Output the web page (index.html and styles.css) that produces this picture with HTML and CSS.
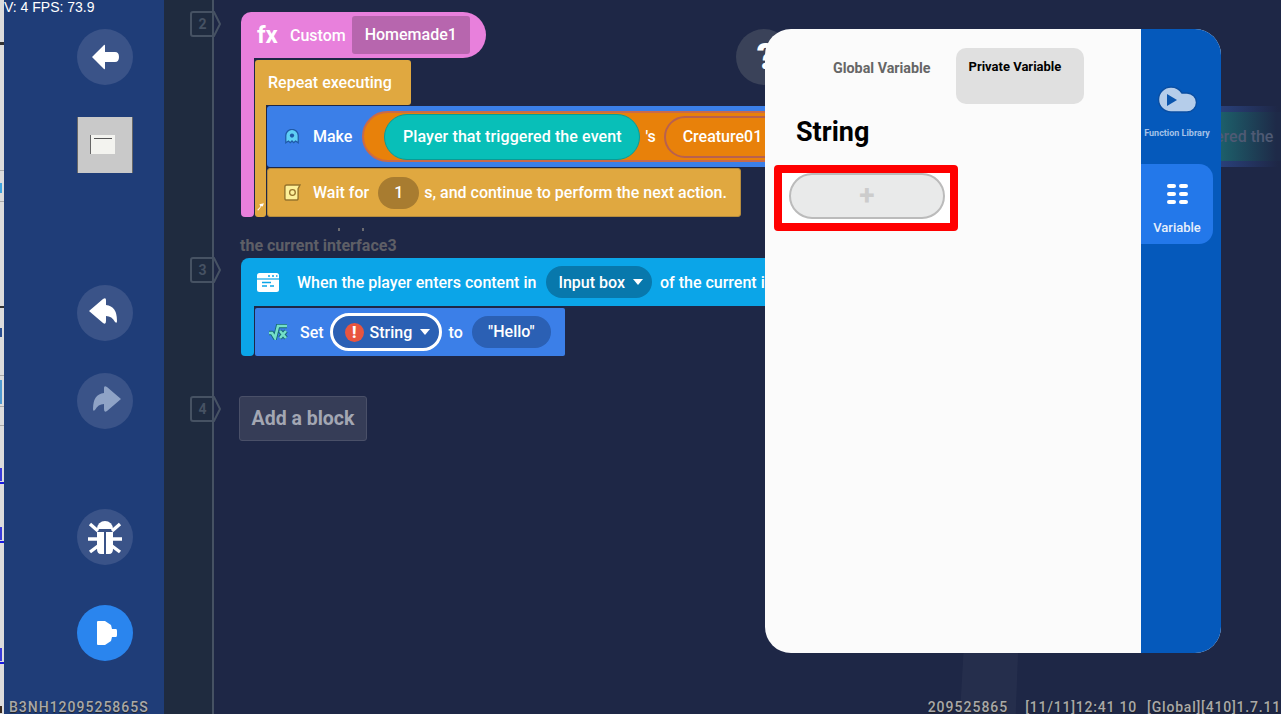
FILE: index.html

```html
<!DOCTYPE html>
<html lang="en">
<head>
<meta charset="UTF-8">
<meta name="viewport" content="width=device-width, initial-scale=1.0">
<title>Block Editor - Variables</title>
<link rel="stylesheet" href="styles.css">
</head>
<body>
<div class="app">
  <div class="edge"></div>

  <div class="sidebar">
    <button class="round back">
      <svg viewBox="0 0 56 56"><path d="M15 28 L27 16 Q28 15 28 17 V23 H38 Q42 23 42 28 Q42 33 38 33 H28 V39 Q28 41 27 40 Z" fill="#fff"/></svg>
    </button>
    <div class="thumb"><div class="thumb-page"><span class="thumb-line"></span></div></div>
    <button class="round undo">
      <svg viewBox="0 0 56 56"><path d="M12 26 L26 14 Q29 12 29 15 V20 Q40 21 40 36 Q40 39 38 37 Q35 31 29 31 V36 Q29 40 26 38 Z" fill="#fff"/></svg>
    </button>
    <button class="round redo">
      <svg viewBox="0 0 56 56"><path d="M44 26 L30 14 Q27 12 27 15 V20 Q16 21 16 36 Q16 39 18 37 Q21 31 27 31 V36 Q27 40 30 38 Z" fill="#8fa3c6"/></svg>
    </button>
    <button class="round bug">
      <svg viewBox="0 0 56 56">
        <path d="M20 20 A8 8 0 0 1 36 20 Z" fill="#fff"/>
        <path d="M20 23 H27 V45 H24 Q20 45 20 40 Z M29 23 H36 V40 Q36 45 32 45 H29 Z" fill="#fff"/>
        <path d="M13 15 L21 22 M43 15 L35 22 M11 30 H21 M45 30 H35 M13 43 L21 37 M43 43 L35 37" stroke="#fff" stroke-width="3.4" fill="none"/>
      </svg>
    </button>
    <button class="round play">
      <svg viewBox="0 0 56 56"><path d="M20 17 Q20 16 21 16 H28 L34 20 L35 24 H39 Q40 24 40 26 V30 Q40 32 39 32 H35 L34 36 L28 40 H21 Q20 40 20 39 Z" fill="#fff"/></svg>
    </button>
  </div>

  <div class="stage">
    <div class="row row-fn">
      <span class="tag"><svg viewBox="0 0 31 26"><path d="M3 1 H24 L30 13 L24 25 H3 Q1 25 1 23 V3 Q1 1 3 1 Z"/></svg>2</span>
      <div class="fn">
        <div class="fn-head">
          <span class="fx">fx</span>
          <span>Custom</span>
          <span class="fn-name">Homemade1</span>
        </div>
        <div class="fn-body">
          <div class="fn-arm"></div>
          <div class="loop">
            <div class="loop-head">Repeat executing</div>
            <div class="loop-body">
              <div class="loop-arm"><svg viewBox="0 0 8 8"><path d="M1 7 L4 4 L3 2 L7 1 L6 4 L5 3.5 L2 7.5 Z" fill="#fff"/></svg></div>
              <div class="loop-rows">
                <div class="make">
                  <svg class="ico-ghost" viewBox="0 0 18 16"><path d="M2 15 V7 A7 7 0 0 1 16 7 V15 L13 13 L11 15 L9 13 L7 15 L5 13 Z" fill="#5fd0f5" stroke="#1f5aa8" stroke-width="1.4"/><circle cx="9" cy="7" r="2.4" fill="#1f5aa8"/></svg>
                  <span>Make</span>
                  <div class="slot">
                    <span class="player">Player that triggered the event</span>
                    <span class="poss">'s</span>
                    <span class="creature">Creature01</span>
                  </div>
                </div>
                <div class="wait">
                  <svg class="ico-wait" viewBox="0 0 20 18"><path d="M3 3 Q3 1 5 1 H19 L17 5 V15 Q17 17 15 17 H5 Q3 17 3 15 Z" fill="#fdf09a" stroke="#96742c" stroke-width="1.5"/><circle cx="11" cy="9" r="3" fill="none" stroke="#96742c" stroke-width="1.4"/></svg>
                  <span>Wait for</span>
                  <span class="num">1</span>
                  <span class="wait-tail">s, and continue to perform the next action.</span>
                </div>
              </div>
            </div>
          </div>
        </div>
      </div>
    </div>

    <div class="cut-marks"><i></i><i></i></div>
    <div class="caption">the current interface3</div>

    <div class="row row-event">
      <span class="tag"><svg viewBox="0 0 31 26"><path d="M3 1 H24 L30 13 L24 25 H3 Q1 25 1 23 V3 Q1 1 3 1 Z"/></svg>3</span>
      <div class="event">
        <div class="event-head">
          <svg class="ico-window" viewBox="0 0 22 19"><rect width="22" height="19" rx="2.5" fill="#fff"/><path d="M0 6 H22" stroke="#0ba5e8" stroke-width="1.2"/><path d="M11 3 H13 M15 3 H17 M19 3 H20.5" stroke="#0ba5e8" stroke-width="1.3"/><path d="M5 9.5 H14 M5 13 H10 M13 13 H17" stroke="#0ba5e8" stroke-width="1.6"/></svg>
          <span>When the player enters content in</span>
          <span class="pick">Input box <b class="caret"></b></span>
          <span>of the current interface</span>
        </div>
        <div class="event-body">
          <div class="event-arm"></div>
          <div class="set">
            <svg class="ico-set" viewBox="0 0 20 16"><path d="M1 9 H4 L7 14 L10 2 H19 M12 7 L18 14 M18 7 L12 14" fill="none" stroke="#176a78" stroke-width="4.4"/><path d="M1 9 H4 L7 14 L10 2 H19 M12 7 L18 14 M18 7 L12 14" fill="none" stroke="#74e0c8" stroke-width="2.6"/></svg>
            <span>Set</span>
            <span class="var-chip"><span class="warn">!</span>String <b class="caret"></b></span>
            <span>to</span>
            <span class="value">"Hello"</span>
          </div>
        </div>
      </div>
    </div>

    <div class="row row-add">
      <span class="tag"><svg viewBox="0 0 31 26"><path d="M3 1 H24 L30 13 L24 25 H3 Q1 25 1 23 V3 Q1 1 3 1 Z"/></svg>4</span>
      <div class="add">Add a block</div>
    </div>
  </div>

  <div class="beam"></div>
  <div class="help">?</div>
  <div class="ghost"><span>ered the</span></div>

  <div class="panel">
    <div class="panel-main">
      <div class="tabs">
        <span class="tab">Global Variable</span>
        <span class="tab tab-on">Private Variable</span>
      </div>
      <h2 class="panel-title">String</h2>
      <div class="mark-box">
        <div class="add-var">+</div>
      </div>
    </div>
    <div class="panel-side">
      <div class="side-item">
        <svg class="ico-cloud" viewBox="0 0 40 28"><path d="M14 1 A13 13 0 0 1 25 7 H30 A9.5 9.5 0 0 1 30 26 H14 A12.5 12.5 0 0 1 14 1 Z" fill="#b5cdea" stroke="#0a4ea2" stroke-width="1.4"/><path d="M10 8 L20 14 L10 20 Z" fill="#0a55ad"/></svg>
        <span>Function Library</span>
      </div>
      <div class="side-item side-on">
        <div class="dash-grid"><i></i><i></i><i></i><i></i><i></i><i></i></div>
        <span>Variable</span>
      </div>
    </div>
  </div>

  <div class="hud-fps">V: 4 FPS: 73.9</div>
  <div class="hud-bottom">
    <span>B3NH1209525865S</span>
    <span class="hud-right"><span>209525865</span><span class="hud-time">[11/11]12:41 10</span><span class="hud-ver">[Global][410]1.7.11</span></span>
  </div>
</div>
</body>
</html>
```

FILE: styles.css

```css
* {
  box-sizing: border-box;
}

html, body {
  margin: 0;
  height: 100%;
  overflow: hidden;
}

body {
  font-family: Roboto, "Liberation Sans", sans-serif;
  font-weight: 500;
  font-size: 16px;
  color: #fff;
  background: #1e2746;
}

.app {
  position: relative;
  display: flex;
  width: 1281px;
  height: 714px;
  overflow: hidden;
}

/* sliver of the page behind the game: clipped links and table lines */
.edge {
  flex: 0 0 4px;
  background:
    linear-gradient(to bottom,
      transparent 183px, #3fa5e0 183px 193px, transparent 193px 328px,
      #2b4f90 328px 337px, transparent 337px 380px, #4f9ad0 380px 404px, transparent 404px 468px,
      #3a3ad8 468px 481px, transparent 481px 527px,
      #3a3ad8 527px 540px, transparent 540px 648px,
      #3a3ad8 648px 661px, transparent 661px 706px,
      #3a2a20 706px 713px, transparent 713px) 0 0 / 2px 100% no-repeat,
    linear-gradient(to bottom,
      #dcdcdc 0 42px, #333 42px 45px, #dcdcdc 45px 170px, #aaa 170px 171px,
      #dcdcdc 171px 201px, #aaa 201px 202px, #dcdcdc 202px 306px, #333 306px 308px,
      #dcdcdc 308px 375px, #aaa 375px 376px, #dcdcdc 376px 406px, #aaa 406px 407px,
      #dcdcdc 407px 425px, #aaa 425px 426px, #dcdcdc 426px 482px, #1a1ae0 482px 484px,
      #dcdcdc 484px 541px, #1a1ae0 541px 543px, #dcdcdc 543px 662px, #1a1ae0 662px 664px,
      #dcdcdc 664px);
}

.sidebar {
  flex: 0 0 160px;
  display: flex;
  flex-direction: column;
  align-items: flex-start;
  padding: 29px 0 0 73px;
  background: #1f3d78;
}

.round {
  display: block;
  width: 56px;
  height: 56px;
  padding: 0;
  border: 0;
  border-radius: 50%;
  background: #3a5388;
}

.round svg {
  display: block;
  width: 56px;
  height: 56px;
}

.thumb {
  display: flex;
  width: 56px;
  height: 56px;
  margin-top: 32px;
  padding: 18px 0 0 12px;
  background: #c9c9c9;
  border-left: 1px solid #666;
  border-right: 1px solid #666;
}

.thumb-page {
  width: 25px;
  height: 19px;
  padding: 3px 3px 0;
  background: #f3f3ef;
  border-left: 1px solid #666;
}

.thumb-line {
  display: block;
  height: 1px;
  background: #555;
}

.undo { margin-top: 112px; }
.redo { margin-top: 32px; }
.bug { margin-top: 80px; }
.play { margin-top: 40px; background: #2a85ee; }

.stage {
  flex: 1;
  padding: 11px 0 0 26px;
  background:
    linear-gradient(to right, #1f2b3f 0 48px, #465263 48px 50px, transparent 50px),
    #1e2746;
}

.row {
  display: flex;
  align-items: flex-start;
}

/* step number, pointed on the right */
.tag {
  position: relative;
  flex: 0 0 31px;
  width: 31px;
  height: 26px;
  margin-right: 20px;
  padding-right: 6px;
  text-align: center;
  line-height: 26px;
  font-size: 14px;
  font-weight: 700;
  color: #465263;
}

.tag svg {
  position: absolute;
  left: 0;
  top: 0;
  width: 31px;
  height: 26px;
  fill: none;
  stroke: #465263;
  stroke-width: 2;
}

.fn {
  margin-top: 1px;
}

.fn-head {
  display: flex;
  align-items: center;
  width: 245px;
  height: 46px;
  padding-left: 16px;
  background: #e880dc;
  border-radius: 10px 23px 23px 0;
}

.fx {
  width: 33px;
  font-size: 24px;
  font-weight: 700;
}

.fn-name {
  width: 118px;
  height: 38px;
  margin-left: 6px;
  line-height: 38px;
  text-align: center;
  background: #b766ae;
  border-radius: 3px;
}

.fn-body {
  display: flex;
}

.fn-arm {
  width: 13px;
  height: 159px;
  background: #e880dc;
  border-radius: 0 0 4px 4px;
}

.loop {
  margin: 2px 0 0 1px;
}

.loop-head {
  width: 156px;
  height: 45px;
  padding-left: 13px;
  line-height: 45px;
  background: #e0a840;
  border-radius: 3px 3px 3px 0;
}

.loop-body {
  display: flex;
}

.loop-arm {
  display: flex;
  align-items: flex-end;
  width: 11px;
  height: 112px;
  padding: 0 1px 6px;
  background: #e0a840;
  border-radius: 0 0 3px 3px;
}

.loop-arm svg {
  width: 9px;
  height: 9px;
}

.loop-rows {
  display: flex;
  flex-direction: column;
  gap: 1px;
  margin: 1px 0 0 1px;
}

.make {
  display: flex;
  align-items: center;
  width: 540px;
  height: 61px;
  padding-left: 17px;
  background: #3b7fe8;
  border-radius: 3px 0 0 3px;
}

.ico-ghost {
  flex: none;
  width: 16px;
  height: 15px;
  margin-right: 13px;
}

.slot {
  display: flex;
  flex: none;
  align-items: center;
  height: 51px;
  margin-left: 10px;
  padding-left: 20px;
  width: 420px;
  background: #e8810a;
  border: 2px solid #c96a4a;
  border-radius: 26px 0 0 26px;
}

.player {
  flex: 0 0 256px;
  height: 46px;
  line-height: 44px;
  letter-spacing: 0.1px;
  text-align: center;
  background: #08bfb8;
  border: 1px solid #0b9a96;
  border-radius: 23px;
}

.poss {
  margin: 0 8px 0 5px;
}

.creature {
  flex: 0 0 120px;
  height: 42px;
  padding-left: 17px;
  line-height: 38px;
  border: 2px solid #b8604f;
  border-radius: 21px 0 0 21px;
}

.wait {
  display: flex;
  align-items: center;
  width: 474px;
  height: 49px;
  padding-left: 14px;
  background: #e0a840;
  border: 1px solid #b58c3e;
  border-radius: 3px;
}

.ico-wait {
  flex: none;
  width: 19px;
  height: 17px;
  margin-right: 12px;
}

.num {
  width: 41px;
  height: 32px;
  margin: 0 5px 0 9px;
  line-height: 32px;
  text-align: center;
  background: #a87c30;
  border-radius: 16px;
}

.cut-marks {
  display: flex;
  gap: 22px;
  height: 4px;
  margin: 11px 0 0 148px;
}

.cut-marks i {
  width: 2px;
  height: 3px;
  background: #6b6b70;
}

.caption {
  height: 15px;
  margin: 6px 0 5px 50px;
  line-height: 16px;
  font-size: 16px;
  font-weight: 700;
  color: #5e5f66;
}

.row-event .tag {
  margin-top: -1px;
}

.event-head {
  display: flex;
  align-items: center;
  width: 560px;
  height: 48px;
  padding-left: 16px;
  white-space: nowrap;
  background: #0ba5e8;
  border-radius: 8px 0 0 0;
}

.ico-window {
  flex: none;
  width: 22px;
  height: 19px;
  margin-right: 18px;
}

.pick {
  display: flex;
  flex: none;
  align-items: center;
  gap: 8px;
  height: 32px;
  margin: 0 8px 0 10px;
  padding: 0 9px 0 12px;
  background: #0878ac;
  border-radius: 16px;
}

.caret {
  width: 0;
  height: 0;
  border-left: 5px solid transparent;
  border-right: 5px solid transparent;
  border-top: 6px solid #fff;
}

.event-body {
  display: flex;
}

.event-arm {
  width: 13px;
  height: 50px;
  background: #0ba5e8;
  border-radius: 0 0 4px 4px;
}

.set {
  display: flex;
  align-items: center;
  width: 310px;
  height: 48px;
  margin: 2px 0 0 1px;
  padding-left: 13px;
  background: #3b7fe8;
  border-radius: 2px;
}

.ico-set {
  flex: none;
  width: 20px;
  height: 16px;
  margin-right: 12px;
}

.var-chip {
  display: flex;
  flex: none;
  align-items: center;
  width: 112px;
  height: 38px;
  margin: 0 7px 0 6px;
  padding-left: 12px;
  background: #2b60b4;
  border: 3px solid #fff;
  border-radius: 19px;
}

.var-chip .caret {
  margin-left: 8px;
}

.warn {
  flex: none;
  width: 19px;
  height: 19px;
  margin-right: 6px;
  line-height: 19px;
  text-align: center;
  font-weight: 900;
  background: #e8553f;
  border-radius: 50%;
}

.value {
  width: 79px;
  height: 32px;
  margin-left: 9px;
  line-height: 32px;
  text-align: center;
  background: #2b60b4;
  border-radius: 16px;
}

.row-add {
  margin-top: 40px;
}

.add {
  width: 128px;
  height: 45px;
  margin-left: -2px;
  line-height: 43px;
  text-align: center;
  font-size: 19.5px;
  font-weight: 700;
  color: #a3a7b3;
  background: #363d57;
  border: 1px solid #4a5068;
  border-radius: 3px;
}

.beam {
  position: absolute;
  left: 960px;
  top: 653px;
  width: 58px;
  height: 61px;
  background: rgba(255, 255, 255, 0.035);
  clip-path: polygon(6% 0, 100% 0, 96% 100%, 0 100%);
}

.help {
  position: absolute;
  left: 736px;
  top: 29px;
  width: 56px;
  height: 56px;
  padding-left: 4px;
  line-height: 56px;
  text-align: center;
  font-size: 36px;
  font-weight: 900;
  background: #3a4259;
  border-radius: 50%;
}

.ghost {
  position: absolute;
  left: 1221px;
  top: 106px;
  width: 60px;
  height: 61px;
  padding: 6px 0;
  background: linear-gradient(to right, #29407a, #1e2746 95%);
}

.ghost span {
  display: block;
  height: 49px;
  line-height: 49px;
  text-indent: -6px;
  color: #4f5a74;
  white-space: nowrap;
  background: linear-gradient(to right, #1d5f6a, #1e2a48 92%);
}

.panel {
  position: absolute;
  left: 765px;
  top: 29px;
  display: flex;
  width: 456px;
  height: 624px;
  overflow: hidden;
  background: #fbfbfb;
  border-radius: 26px;
}

.panel-main {
  flex: 0 0 376px;
  padding: 19px 0 0 9px;
  color: #000;
}

.tabs {
  display: flex;
  align-items: flex-start;
  padding-left: 59px;
}

.tab {
  padding-top: 12px;
  font-size: 14.3px;
  font-weight: 700;
  color: #666;
}

.tab-on {
  width: 128px;
  height: 56px;
  margin-left: 25px;
  padding: 11px 0 0 13px;
  font-size: 13px;
  color: #000;
  background: #e0e0e0;
  border-radius: 10px;
}

.panel-title {
  margin: 12px 0 0 22px;
  height: 33px;
  line-height: 33px;
  font-size: 27px;
  font-weight: 700;
}

.mark-box {
  width: 184px;
  height: 66px;
  margin-top: 16px;
  padding: 0 5px 0 7px;
  background: #fff;
  border: 8px solid #f00;
  border-radius: 4px;
}

.add-var {
  width: 156px;
  height: 46px;
  line-height: 42px;
  text-align: center;
  font-size: 28px;
  font-weight: 700;
  color: #ccc;
  background: #e9eaea;
  border: 2px solid #bbb;
  border-radius: 23px;
}

.panel-side {
  flex: 1;
  padding-top: 52px;
  background: #0559bb;
}

.side-item {
  display: flex;
  flex-direction: column;
  align-items: center;
  width: 72px;
  font-size: 9px;
  font-weight: 700;
  color: #a4c1e8;
}

.ico-cloud {
  width: 40px;
  height: 28px;
  margin: 5px 0 14px;
}

.side-on {
  height: 80px;
  margin-top: 26px;
  padding-top: 20px;
  font-size: 13px;
  font-weight: 500;
  color: #e6effb;
  background: #2378ea;
  border-radius: 0 14px 14px 0;
}

.dash-grid {
  display: grid;
  grid-template-columns: 9px 9px;
  gap: 4px 3px;
  margin-bottom: 16px;
}

.dash-grid i {
  height: 4px;
  background: #fff;
  border-radius: 2px;
}

.hud-fps {
  position: absolute;
  left: 4px;
  top: 0;
  font-family: "Liberation Sans", sans-serif;
  font-weight: 400;
  font-size: 14px;
  line-height: 14px;
}

.hud-bottom {
  position: absolute;
  left: 9px;
  right: 0;
  top: 701px;
  display: flex;
  justify-content: space-between;
  font-size: 14px;
  line-height: 13px;
  letter-spacing: 1px;
  color: #a9a9a9;
  text-shadow: 0 1px 1px #222;
}

.hud-right {
  display: flex;
  white-space: nowrap;
}

.hud-time {
  margin-left: 17px;
  letter-spacing: 0.8px;
}

.hud-ver {
  margin-left: 10px;
  letter-spacing: 0.8px;
}
```
